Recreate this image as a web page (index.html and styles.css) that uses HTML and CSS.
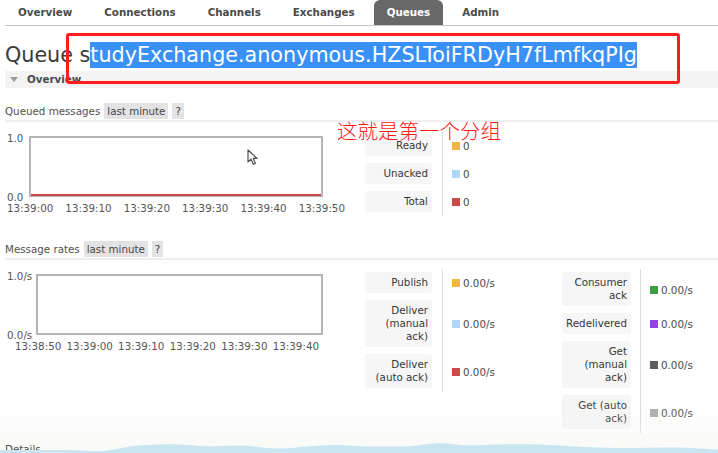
FILE: index.html
```html
<!DOCTYPE html>
<html lang="zh-CN">
<head>
<meta charset="utf-8">
<title>Queue</title>
<link rel="stylesheet" href="styles.css">
</head>
<body>
<div class="page">
  <nav class="tabs">
    <a class="tab">Overview</a>
    <a class="tab">Connections</a>
    <a class="tab">Channels</a>
    <a class="tab">Exchanges</a>
    <a class="tab active">Queues</a>
    <a class="tab">Admin</a>
  </nav>

  <h1 class="title">Queue s<span class="sel">tudyExchange.anonymous.HZSLToiFRDyH7fLmfkqPIg</span></h1>

  <div class="section-bar"><span class="tri"></span>Overview</div>

  <div class="sub-head"><span>Queued messages</span><span class="pill">last minute</span><span class="pill q">?</span></div>

  <div class="panel">
    <div class="chart c1">
      <div class="plotrow">
        <div class="yaxis"><span>1.0</span><span>0.0</span></div>
        <div class="plot"><div class="series"></div></div>
      </div>
      <div class="xaxis">
        <span>13:39:00</span><span>13:39:10</span><span>13:39:20</span><span>13:39:30</span><span>13:39:40</span><span>13:39:50</span>
      </div>
    </div>
    <div class="legend l1">
      <div class="lbl"><span class="box">Ready</span></div><div class="val"><i class="sw yellow"></i>0</div>
      <div class="lbl"><span class="box">Unacked</span></div><div class="val"><i class="sw blue"></i>0</div>
      <div class="lbl"><span class="box">Total</span></div><div class="val"><i class="sw red"></i>0</div>
    </div>
  </div>

  <div class="sub-head rates"><span>Message rates</span><span class="pill">last minute</span><span class="pill q">?</span></div>

  <div class="panel">
    <div class="chart c2">
      <div class="plotrow">
        <div class="yaxis"><span>1.0/s</span><span>0.0/s</span></div>
        <div class="plot"></div>
      </div>
      <div class="xaxis">
        <span>13:38:50</span><span>13:39:00</span><span>13:39:10</span><span>13:39:20</span><span>13:39:30</span><span>13:39:40</span>
      </div>
    </div>
    <div class="legend l2">
      <div class="lbl"><span class="box">Publish</span></div><div class="val"><i class="sw yellow"></i>0.00/s</div>
      <div class="lbl"><span class="box">Deliver (manual ack)</span></div><div class="val"><i class="sw blue"></i>0.00/s</div>
      <div class="lbl"><span class="box">Deliver (auto ack)</span></div><div class="val"><i class="sw red"></i>0.00/s</div>
    </div>
    <div class="legend l3">
      <div class="lbl"><span class="box">Consumer ack</span></div><div class="val"><i class="sw green"></i>0.00/s</div>
      <div class="lbl"><span class="box">Redelivered</span></div><div class="val"><i class="sw purple"></i>0.00/s</div>
      <div class="lbl"><span class="box">Get (manual ack)</span></div><div class="val"><i class="sw dark"></i>0.00/s</div>
      <div class="lbl"><span class="box">Get (auto ack)</span></div><div class="val"><i class="sw grey"></i>0.00/s</div>
    </div>
  </div>

  <div class="details">Details</div>
</div>

<div class="annot-box"></div>
<div class="annot-text">这就是第一个分组</div>

<svg class="cursor" width="13" height="17" viewBox="0 0 13 17">
  <path d="M1 1 L1 13 L4 10.2 L6.3 15.2 L8.4 14.2 L6.2 9.4 L10 9.4 Z" fill="#fff" stroke="#444" stroke-width="1.1" stroke-linejoin="round"/>
</svg>

<div class="fade"></div>
<svg class="wave" width="718" height="14" viewBox="0 0 718 14" preserveAspectRatio="none">
  <path d="M0 11 L70 11 C80 11 90 12.5 100 12 C115 11.5 125 7 145 6 C165 5 180 5 200 7 C215 8 225 6 240 6.5 C255 7 262 9 275 9.5 C290 10 305 7 330 6 C345 5.5 355 7.5 375 7.5 C395 7.5 410 8 425 5.5 C435 3.5 445 3.5 455 5.5 C465 7 480 6 500 5.5 C520 5 540 5 560 6.5 C580 8 600 9 625 9 C650 9 670 8 690 9 C700 9.5 710 10 718 10.5 L718 14 L0 14 Z" fill="#c9e5f1"/>
</svg>
</body>
</html>
```

FILE: styles.css
```css
html, body {
  margin: 0;
  padding: 0;
}

body {
  width: 718px;
  height: 453px;
  overflow: hidden;
  position: relative;
  background: #fff;
  color: #444;
  font-family: "DejaVu Sans", Verdana, sans-serif;
  font-size: 10.3px;
}

.page {
  padding-left: 5px;
}

/* ---------- tabs ---------- */
.tabs {
  display: flex;
  gap: 6px;
  height: 25px;
  border-bottom: 1px solid #c8c8c8;
}

.tab {
  padding: 0 13px;
  line-height: 25px;
  font-weight: bold;
  font-size: 10.3px;
  color: #4a4a4a;
}

.tab.active {
  background: #686868;
  color: #fff;
  border-radius: 6px 6px 0 0;
}

/* ---------- title ---------- */
.title {
  margin: 16px 0 0;
  font-size: 20.7px;
  font-weight: normal;
  line-height: 26px;
  height: 26px;
  color: #3a3a3a;
  white-space: nowrap;
}

.sel {
  display: inline-block;
  background: #3990f7;
  color: #fff;
}

/* ---------- section bar ---------- */
.section-bar {
  margin-top: 3px;
  height: 17px;
  line-height: 17px;
  background: #f3f3f3;
  padding-left: 5px;
  font-weight: bold;
  color: #4a4a4a;
  display: flex;
  align-items: center;
}

.tri {
  width: 0;
  height: 0;
  border-left: 4px solid transparent;
  border-right: 4px solid transparent;
  border-top: 5px solid #9a9a9a;
  margin-right: 9px;
}

/* ---------- sub headers ---------- */
.sub-head {
  margin-top: 15px;
  height: 17px;
  display: flex;
  align-items: flex-start;
  gap: 4px;
  border-bottom: 2px solid #eeeeee;
  color: #505050;
  line-height: 16px;
}

.sub-head.rates {
  margin-top: 25px;
}

.pill {
  background: #e3e3e3;
  padding: 0 3px;
  height: 16px;
  color: #454545;
}

/* ---------- panel ---------- */
.panel {
  display: flex;
  align-items: flex-start;
  margin-top: 10px;
}

.sub-head.rates + .panel {
  margin-top: 9px;
}

.chart {
  width: 360px;
  flex: none;
  color: #555;
}

.c1 {
  padding-top: 4px;
}

.c2 {
  padding-top: 5px;
}

.plotrow {
  display: flex;
  margin-left: 2px;
}

.yaxis {
  display: flex;
  flex-direction: column;
  justify-content: space-between;
  line-height: 12px;
  margin: -4px 0 -6px;
}

.c1 .yaxis { width: 22px; }
.c2 .yaxis { width: 29px; }

.plot {
  height: 61px;
  box-sizing: border-box;
  border: 2px solid #b4b4b4;
  display: flex;
  align-items: flex-end;
}

.c1 .plot { width: 294px; }
.c2 .plot { width: 287px; }

.series {
  width: 100%;
  height: 2px;
  margin-bottom: -1px;
  background: #cb4b4b;
}

.xaxis {
  display: flex;
  justify-content: space-between;
  margin-top: 5px;
  line-height: 13px;
}

.c1 .xaxis {
  margin-left: 2px;
  width: 338px;
}

.c2 .xaxis {
  margin-left: 10px;
  width: 304px;
}

/* ---------- legends ---------- */
.legend {
  display: grid;
  flex: none;
}

.l1 { grid-template-columns: 77px 120px; }
.l2 { grid-template-columns: 77px 120px; }
.l3 { grid-template-columns: 78px 70px; }

.lbl {
  padding: 3px 10px 4px 0;
}

.l3 .lbl {
  padding-right: 9px;
}

.box {
  display: block;
  background: #f6f6f6;
  border-radius: 3px;
  padding: 4px 4px;
  line-height: 13px;
  text-align: right;
  color: #363636;
}

.val {
  border-left: 1px solid #dcdcdc;
  padding-left: 9px;
  display: flex;
  align-items: center;
  gap: 3px;
  color: #4a4a4a;
}

.sw {
  display: inline-block;
  width: 8px;
  height: 8px;
}

.sw.yellow { background: #efb83d; }
.sw.blue   { background: #afd8f8; }
.sw.red    { background: #cb4b4b; }
.sw.green  { background: #3f9b47; }
.sw.purple { background: #9440ed; }
.sw.dark   { background: #5e5e5e; }
.sw.grey   { background: #aaaaaa; }

/* ---------- details ---------- */
.details {
  margin-top: 8px;
  line-height: 17px;
  color: #505050;
  position: relative;
  z-index: 1;
}

/* ---------- overlays ---------- */
.annot-box {
  position: absolute;
  left: 66px;
  top: 33px;
  width: 614px;
  height: 51px;
  box-sizing: border-box;
  border: 3px solid #ff1c1c;
  border-radius: 3px;
}

.annot-text {
  position: absolute;
  left: 337px;
  top: 119px;
  font-family: "Noto Sans CJK SC", sans-serif;
  font-weight: 300;
  font-size: 20.5px;
  line-height: 22px;
  color: #ff1a1a;
  white-space: nowrap;
}

.cursor {
  position: absolute;
  left: 247px;
  top: 149px;
}

.fade {
  position: absolute;
  left: 0;
  right: 0;
  bottom: 0;
  height: 60px;
  background: linear-gradient(to bottom, rgba(240, 240, 236, 0), rgba(238, 238, 234, 0.35));
}

.wave {
  position: absolute;
  left: 0;
  bottom: 0;
  z-index: 2;
}
```
